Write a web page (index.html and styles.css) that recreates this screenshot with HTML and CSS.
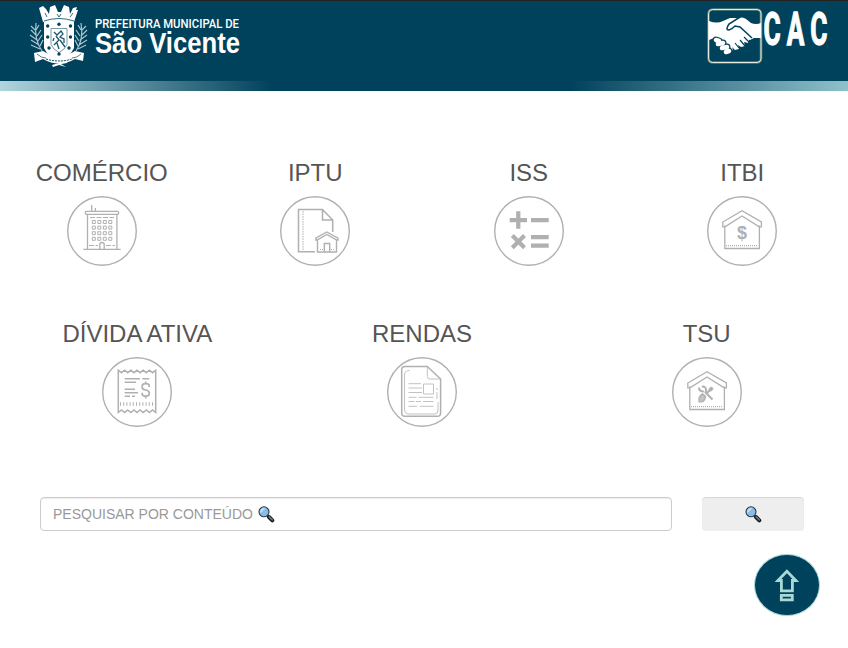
FILE: index.html
```
<!DOCTYPE html>
<html lang="pt-BR">
<head>
<meta charset="utf-8">
<title>CAC - Prefeitura Municipal de São Vicente</title>
<link rel="stylesheet" href="styles.css">
</head>
<body>
<svg class="defs" width="0" height="0" aria-hidden="true">
  <symbol id="lens" viewBox="0 0 17 17">
    <path d="M9.600 9.600l1.400 1.400" stroke="#222" stroke-width="2"/>
    <path d="M11 11l3.300 3.300" stroke="#17191b" stroke-width="4" stroke-linecap="round"/>
    <path d="M11.200 10.800l3.100 3.100" stroke="#68757b" stroke-width="1.700" stroke-linecap="round"/>
    <circle cx="6" cy="5.800" r="5" fill="#85bce9" stroke="#303b42" stroke-width="1.100"/>
    <path d="M2.300 7.200A4 4 0 0 1 7.500 2.200z" fill="#bfe0fa"/>
  </symbol>
  <symbol id="house" viewBox="707 196 70 70">
    <path d="M724.800 225.500V248.500H759.400V225.500M722.800 226.800V222L742 210.800 761.400 222V226.800H759.200L742 216 725 226.800z"/>
    <path d="M726 245.600h32" stroke-dasharray="1 1"/>
  </symbol>
</svg>

<header class="top">
  <svg class="crest" width="60" height="66" viewBox="28 3 60 66">
    <g fill="#fff">
      <path d="M39 8l4-2 3 3 3 5 1-7 5-2 3 7h3l3-7 5 2 1 7 3-6 4-1-1 3h2l-4 12q-15-4-31 0z"/>
      <path d="M44 20q14-4 30 0v28q-4 9-15 13-11-4-15-13z"/>
      <path d="M34 53l9-2q16 10 32 0l9 2-1 8-8-2q-16 9-32 0l-8 3z"/>
      <path d="M52 65l14-4 1 2-6 1 5 3-7-2-6 2z"/>
    </g>
    <path d="M45 13l2 4M57 14l2 3 2-3M73 13l-3 4M44 21q15-5 30 0" fill="none" stroke="#00425c" stroke-width=".8"/>
    <path d="M51 28.500h16v16q-2 5-8 8-6-3-8-8z" fill="none" stroke="#56818f" stroke-width=".8"/>
    <path d="M54 32l3 3 4-4 2 3-3 3 4 2v4M56 36l3 4-5 5M60 40l5 7M57 43l2 6M54 38l-1 3" fill="none" stroke="#1b566c" stroke-width="1.300"/>
    <g fill="#00425c"><circle cx="47.700" cy="26" r="1.700"/><circle cx="59" cy="24.300" r="1.700"/><circle cx="70.500" cy="26" r="1.700"/><circle cx="47.700" cy="37" r="1.700"/><circle cx="70.500" cy="37" r="1.700"/><circle cx="49" cy="48" r="1.700"/><circle cx="59" cy="54" r="1.700"/><circle cx="69" cy="48" r="1.700"/></g>
    <path d="M37 54q4 4 9 4M81 54q-4 4-9 4" fill="none" stroke="#56818f"/>
    <path d="M46 59q13 4 26 0" fill="none" stroke="#00425c" stroke-dasharray="2 1"/>
    <path d="M42 51Q34 40 36 23M35 30l-4-4M36 35l-5-5M37 40l-7-5M39 45l-8-5M40 49l-9-4M36 30l3-5M37 36l4-6M38 41l4-6M40 46l3-6M76 51Q84 40 81 23M82 30l4-4M82 35l5-5M80 40l7-5M79 45l8-5M78 49l8-4M81 30l-3-5M80 36l-4-6M79 41l-4-6M78 46l-3-6" fill="none" stroke="#a9c4cd" stroke-width="1.200"/>
  </svg>
  <svg class="city" width="160" height="60" viewBox="92 9 160 60">
    <text class="city-small" x="95" y="28" textLength="144" lengthAdjust="spacingAndGlyphs">PREFEITURA MUNICIPAL DE</text>
    <text class="city-big" x="95" y="53.300" textLength="145" lengthAdjust="spacingAndGlyphs">São Vicente</text>
  </svg>
  <svg class="cac" width="134" height="66" viewBox="704 1 134 66">
    <rect x="708.500" y="9.500" width="52.500" height="53" rx="4" fill="none" stroke="#5b8078" stroke-width="2.600"/>
    <rect x="708.500" y="9.500" width="52.500" height="53" rx="4" fill="none" stroke="#e5eadb" stroke-width="1"/>
    <path d="M709 21q8 3 14 0l7-3h9l-9 5-3 5q3 4 8 0l6-2 9 8 2 4-3 2-1 3-4-1 1 4-4 1-3-2 1 4-4 1-3-3q2 4-2 4l-4-4-12-9-5 2V21z" fill="#fff"/>
    <path d="M728 25l9-6q5-3 9 0l5 4q5 2 10 0v15h-7l-4 2-11-9-4-2-6 2q-4 0-1-6z" fill="#fff"/>
    <path d="M740 17l-11 7q-4 6 0 6 3-1 6-4l5 1 12 11" fill="none" stroke="#00425c" stroke-width="1.500"/>
    <path d="M735 43l4 5M740 40l5 6M744 37l5 5" fill="none" stroke="#00425c" stroke-width="1.200"/>
    <path d="M716 40l3 1M718 44l5-1M722 48l5-1M726 52l3-1" stroke="#00425c" stroke-width="7" stroke-linecap="round"/>
    <path d="M716 40l3 1M718 44l5-1M722 48l5-1M726 52l3-1" stroke="#fff" stroke-width="4.600" stroke-linecap="round"/>
    <text class="cac-text" transform="translate(763.500 44.800) scale(.57 1)"><tspan x="0">C</tspan><tspan x="41">A</tspan><tspan x="82">C</tspan></text>
  </svg>
</header>
<div class="stripe"></div>

<main>
  <div class="row">
    <a class="item"><span>COMÉRCIO</span>
      <svg class="icon" viewBox="67 196 70 70"><circle cx="102" cy="231" r="34.300"/>
        <rect x="85.300" y="211.300" width="33.300" height="3" rx="1"/>
        <path d="M91.700 205v6M95.400 208v3M87.500 214.500v34.500M116.900 214.500v34.500M83.300 249.300h37.400M99.800 249v-4.500q0-2 2.200-2t2.200 2v4.500"/>
        <path class="thin" d="M90 217.500h24M89 245.500h9M106 245.500h9" stroke-dasharray="5 1.500"/>
        <path class="thin" d="M92.300 220.500h3v3h-3zm5.500 0h3v3h-3zm5.500 0h3v3h-3zm5.500 0h3v3h-3zM92.300 226.100h3v3h-3zm5.500 0h3v3h-3zm5.500 0h3v3h-3zm5.500 0h3v3h-3zM92.300 231.700h3v3h-3zm5.500 0h3v3h-3zm5.500 0h3v3h-3zm5.500 0h3v3h-3zM92.300 237.300h3v3h-3zm5.500 0h3v3h-3zm5.500 0h3v3h-3zm5.500 0h3v3h-3z"/>
      </svg></a>
    <a class="item"><span>IPTU</span>
      <svg class="icon" viewBox="280 196 70 70"><circle cx="315" cy="231" r="34.300"/>
        <path stroke-width="1.500" d="M315 251.800h-16.500v-42.300h24l10.200 10.500v12M322.500 209.500v10.500h10.200"/>
        <path class="thin" d="M303 211v40" stroke-dasharray="1.500 1"/>
        <path stroke-width="1.400" d="M317.500 240.500v11.500h19v-11.500M324.300 252v-8.500h5.400v8.500M315.800 240v-1.900l11-6.100 11.200 6.100v1.900h-1.300l-9.900-5.500-9.700 5.500z"/>
        <path class="thin" d="M320 249.500h3M331 249.500h4" stroke-dasharray="1 1"/>
      </svg></a>
    <a class="item"><span>ISS</span>
      <svg class="icon" viewBox="494 196 70 70"><circle cx="529" cy="231" r="34.300"/>
        <path stroke-width="4.200" d="M509.700 220.100H527M518.300 211.300v17.400M531 220.100h17.700M531 237.100h17.700M531 245.700h17.700M512.300 235.600l12.200 12.200M524.500 235.600l-12.200 12.200"/>
      </svg></a>
    <a class="item"><span>ITBI</span>
      <svg class="icon" viewBox="707 196 70 70"><circle cx="742" cy="231" r="34.300"/>
        <use href="#house" x="707" y="196" width="70" height="70"/>
        <text class="money" x="742" y="238.500">$</text>
      </svg></a>
  </div>
  <div class="row second">
    <a class="item"><span>DÍVIDA ATIVA</span>
      <svg class="icon" viewBox="102 357 70 70"><circle cx="137" cy="392" r="34.300"/>
        <path stroke-width="1.500" d="M118.300 410V370.200l3.200 2.500 3.100-2.500 3.100 2.500 3.100-2.500 3.100 2.500 3.100-2.500 3.100 2.500 3.100-2.500 3.100 2.500 3.100-2.500 3.100 2.500 3.200-2.500v42.300l-3.200-2.500-3.100 2.500-3.100-2.500-3.100 2.500-3.100-2.500-3.100 2.500-3.100-2.500-3.100 2.500-3.100-2.500-3.100 2.500-3.100-2.500-3.200 2.500z"/>
        <path stroke-width="1.600" d="M124.700 378.700H140M142.300 378.700h7M124.700 382.300H136M124.700 389.300H135M124.700 392.700H138M124.700 396.300h5.300M132 396.300h3"/>
        <path d="M120 404h34.500" stroke-width="3.300" stroke-dasharray="1 2.200"/>
        <path stroke-width="1.700" d="M149.200 387v-1.300q0-2-3.500-2t-3.500 2.300v1.400q0 2 3.500 2.600t3.500 2.600v1.200q0 2.400-3.500 2.400t-3.500-2.200v-1.200M145.700 381.500v2.200M145.700 396.200v2.300"/>
      </svg></a>
    <a class="item"><span>RENDAS</span>
      <svg class="icon" viewBox="387 357 70 70"><circle cx="422" cy="392" r="34.300"/>
        <path stroke-width="1.500" d="M427.300 366.500H405q-3.300 0-3.300 3.300V413q0 3.300 3.300 3.300h32.300q3.300 0 3.300-3.300V379z"/>
        <path class="light" d="M427.300 367v9.500q0 2.500 2.500 2.500h10.500M409.500 370.500q-5 0-5 4.500v34q0 5 4.500 5h26q3 0 3-4V402M437 388v2M437 392v7M408.500 383.700H421M408.500 388H422M408.500 392.500H422M423.500 384h10v10h-10zM408.500 397.300h8M418.500 397.300h15M408.500 401.500h6M416 401.500h5M423 401.500h10.500M408.500 406.300H417M420 406.300h13.500"/>
      </svg></a>
    <a class="item"><span>TSU</span>
      <svg class="icon" viewBox="672 357 70 70"><circle cx="707" cy="392" r="34.300"/>
        <use href="#house" x="672" y="357" width="70" height="70"/>
        <path stroke-width="2" d="M712.500 399.500l-7-7q1.500-4-1-5.500l-2.500-.7M699 387.500q0 4 4.800 4M706 394l6.500-6.500"/>
        <path stroke-width="3.600" d="M709.500 390.500l2.800-2.800"/>
        <path fill="#c4c4c4" d="M699 401.800v-4q1.500-3 3.500-4l3 2.500q-.5 4-3 5.500z"/>
      </svg></a>
  </div>

  <form class="search">
    <div class="field"><span>PESQUISAR POR CONTEÚDO</span><svg width="17" height="17"><use href="#lens"/></svg></div>
    <button class="go" type="button" aria-label="Pesquisar"><svg width="17" height="17"><use href="#lens"/></svg></button>
  </form>
</main>

<a class="to-top" aria-label="Voltar ao topo">
  <svg width="24" height="34" viewBox="775 568 24 34" fill="none" stroke="#a9d9d6" stroke-width="2.800">
    <path d="M786.900 571.300l-9 9.200h3.500v10.400h11v-10.400h3.500z"/>
    <path d="M781.300 595.300h11v4.600h-11z"/>
  </svg>
</a>
</body>
</html>
```
FILE: styles.css
```
* { box-sizing: border-box; }
body {
  margin: 0;
  height: 648px;
  overflow: hidden;
  background: #fff;
  color: #555;
  font-family: "Liberation Sans", Arial, sans-serif;
}
.defs { position: absolute; }
.top {
  display: flex;
  align-items: flex-start;
  height: 81px;
  padding: 0 10px 0 28px;
  border-top: 1px solid #222;
  background: #00425c;
}
.crest { margin-top: 2px; }
.city { margin: 8px 0 0 4px; }
.cac { margin-left: auto; }
.city text, .cac-text { fill: #fff; }
.city-small { font: 500 13px Roboto, sans-serif; }
.city-big { font: 700 30px "Liberation Sans", sans-serif; }
.cac-text { font: 700 46px Roboto, sans-serif; stroke: #fff; stroke-width: 1.3; }
.stripe {
  height: 10px;
  background: linear-gradient(90deg, #b0d5dd 0, #00425c 272px, #00425c 570px, #8fc1cc 100%);
}
.row {
  display: flex;
  margin: 68px -1px 0 -5px;
}
.row.second { margin-top: 54px; }
.item {
  flex: 1;
  display: flex;
  flex-direction: column;
  align-items: center;
  font-size: 24px;
  line-height: 27px;
}
.icon {
  width: 70px;
  height: 70px;
  margin-top: 10px;
  fill: none;
  stroke: #b0b0b0;
  stroke-width: 1.3;
}
.icon > circle { stroke-width: 1.4; }
.thin { stroke-width: 1; }
.light { stroke: #c2c2c2; stroke-width: 1; }
.money {
  font: 700 18px "Liberation Sans", sans-serif;
  text-anchor: middle;
  fill: #b0b0b0;
  stroke: none;
}
.search {
  display: flex;
  gap: 30px;
  margin: 70px 44px 0 40px;
}
.field {
  flex: 1;
  display: flex;
  align-items: center;
  gap: 5px;
  height: 34px;
  padding: 0 12px;
  border: 1px solid #ccc;
  border-radius: 4px;
  box-shadow: inset 0 1px 1px rgba(0,0,0,.075);
  color: #999;
  font-size: 14px;
}
.go {
  display: flex;
  align-items: center;
  justify-content: center;
  width: 102px;
  height: 34px;
  padding: 0;
  border: 0;
  border-radius: 4px;
  background: #eee;
  box-shadow: inset 0 1px 1px rgba(0,0,0,.1);
}
.to-top {
  position: absolute;
  right: 28px;
  bottom: 32px;
  display: flex;
  align-items: center;
  justify-content: center;
  width: 66px;
  height: 62px;
  border: 1px solid #a9d9d6;
  border-radius: 50%;
  background: #00425c;
}
```
